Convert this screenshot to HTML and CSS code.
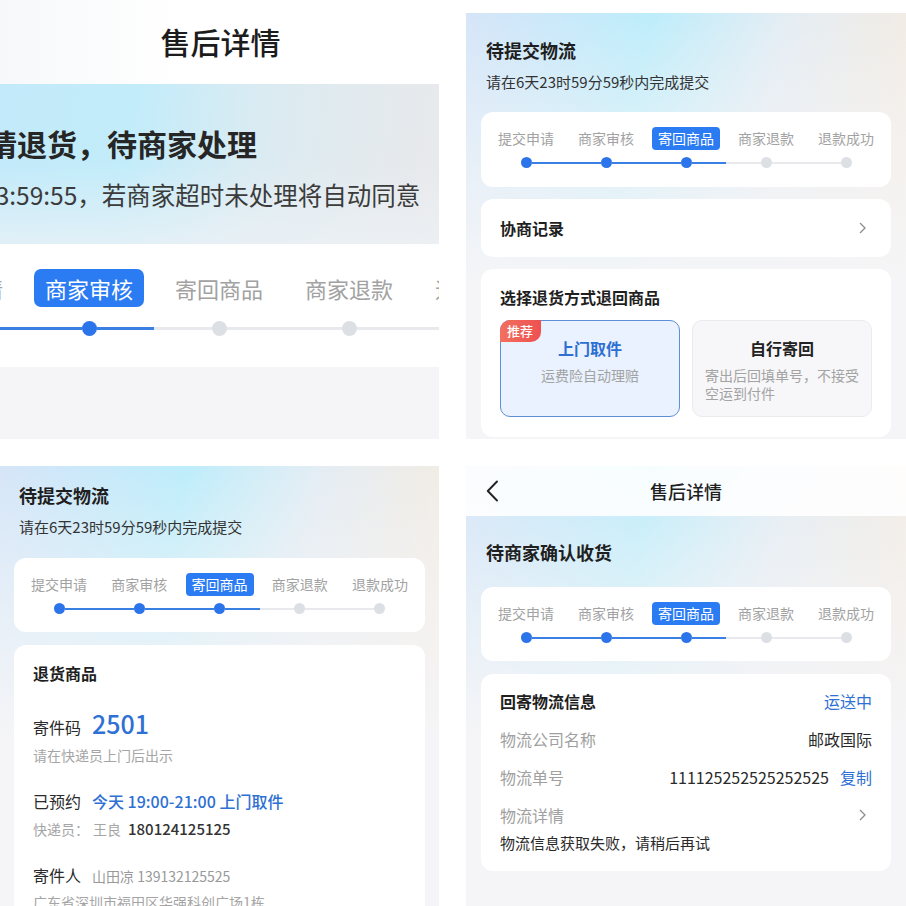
FILE: index.html
```html
<!DOCTYPE html>
<html lang="zh-CN">
<head>
    <meta charset="UTF-8">
    <meta name="viewport" content="width=device-width, initial-scale=1.0">
    <title>售后详情</title>
    <link rel="stylesheet" href="styles.css">
</head>
<body>
<div class="board">

    <!-- 1: zoomed view of the top of the page -->
    <section class="shot">
        <header class="nav-big">售后详情</header>
        <div class="banner-big">
            <h1 class="banner-title">申请退货，待商家处理</h1>
            <p class="banner-sub">还剩6天23:59:55，若商家超时未处理将自动同意</p>
        </div>
        <div class="steps-big">
            <ol class="steps steps-lg">
                <li class="step done"><span class="step-name">提交申请</span><span class="step-track"><i></i></span></li>
                <li class="step current"><span class="step-name">商家审核</span><span class="step-track"><i></i></span></li>
                <li class="step"><span class="step-name">寄回商品</span><span class="step-track"><i></i></span></li>
                <li class="step"><span class="step-name">商家退款</span><span class="step-track"><i></i></span></li>
                <li class="step"><span class="step-name">退款成功</span><span class="step-track"><i></i></span></li>
            </ol>
        </div>
        <div class="fill"></div>
    </section>

    <!-- 2: choose return method -->
    <section class="shot app shot-low">
        <div class="status status-a">
            <h2 class="status-title">待提交物流</h2>
            <p class="status-sub">请在6天23时59分59秒内完成提交</p>
        </div>
        <div class="cards cards-a">
            <div class="card steps-card">
                <ol class="steps">
                    <li class="step done"><span class="step-name">提交申请</span><span class="step-track"><i></i></span></li>
                    <li class="step done"><span class="step-name">商家审核</span><span class="step-track"><i></i></span></li>
                    <li class="step current"><span class="step-name">寄回商品</span><span class="step-track"><i></i></span></li>
                    <li class="step"><span class="step-name">商家退款</span><span class="step-track"><i></i></span></li>
                    <li class="step"><span class="step-name">退款成功</span><span class="step-track"><i></i></span></li>
                </ol>
            </div>
            <div class="card link-card">
                <span class="card-title">协商记录</span>
                <svg class="chev" width="7" height="12" viewBox="0 0 7 12"><path d="M1 1l5 5-5 5" fill="none" stroke="#8c8c8c" stroke-width="1.3"/></svg>
            </div>
            <div class="card method-card">
                <div class="card-title method-title">选择退货方式退回商品</div>
                <div class="methods">
                    <div class="method picked">
                        <span class="badge">推荐</span>
                        <div class="method-name">上门取件</div>
                        <div class="method-desc center">运费险自动理赔</div>
                    </div>
                    <div class="method">
                        <div class="method-name">自行寄回</div>
                        <div class="method-desc">寄出后回填单号，不接受空运到付件</div>
                    </div>
                </div>
            </div>
        </div>
    </section>

    <!-- 3: pickup booked -->
    <section class="shot app">
        <div class="status status-b">
            <h2 class="status-title">待提交物流</h2>
            <p class="status-sub">请在6天23时59分59秒内完成提交</p>
        </div>
        <div class="cards cards-b">
            <div class="card steps-card">
                <ol class="steps">
                    <li class="step done"><span class="step-name">提交申请</span><span class="step-track"><i></i></span></li>
                    <li class="step done"><span class="step-name">商家审核</span><span class="step-track"><i></i></span></li>
                    <li class="step current"><span class="step-name">寄回商品</span><span class="step-track"><i></i></span></li>
                    <li class="step"><span class="step-name">商家退款</span><span class="step-track"><i></i></span></li>
                    <li class="step"><span class="step-name">退款成功</span><span class="step-track"><i></i></span></li>
                </ol>
            </div>
            <div class="card goods-card">
                <div class="card-title">退货商品</div>
                <div class="kv kv-code"><span class="kv-label">寄件码</span><span class="code">2501</span></div>
                <div class="hint">请在快递员上门后出示</div>
                <div class="kv kv-gap"><span class="kv-label">已预约</span><span class="kv-blue">今天 19:00-21:00 上门取件</span></div>
                <div class="hint hint-gap">快递员：<span class="courier">王良</span><span class="phone">180124125125</span></div>
                <div class="kv kv-gap"><span class="kv-label">寄件人</span><span class="kv-gray">山田凉 139132125525</span></div>
                <div class="hint hint-addr">广东省深圳市福田区华强科创广场1栋</div>
            </div>
        </div>
    </section>

    <!-- 4: waiting for merchant to receive -->
    <section class="shot app">
        <header class="nav">
            <svg class="back" width="12" height="22" viewBox="0 0 12 22"><path d="M11 1.5L1.8 11 11 20.5" fill="none" stroke="#222" stroke-width="1.9" stroke-linecap="round" stroke-linejoin="round"/></svg>
            <span class="nav-title">售后详情</span>
            <span></span>
        </header>
        <div class="status status-c">
            <h2 class="status-title">待商家确认收货</h2>
        </div>
        <div class="cards cards-c">
            <div class="card steps-card">
                <ol class="steps">
                    <li class="step done"><span class="step-name">提交申请</span><span class="step-track"><i></i></span></li>
                    <li class="step done"><span class="step-name">商家审核</span><span class="step-track"><i></i></span></li>
                    <li class="step current"><span class="step-name">寄回商品</span><span class="step-track"><i></i></span></li>
                    <li class="step"><span class="step-name">商家退款</span><span class="step-track"><i></i></span></li>
                    <li class="step"><span class="step-name">退款成功</span><span class="step-track"><i></i></span></li>
                </ol>
            </div>
            <div class="card info-card">
                <div class="info-row"><span class="card-title">回寄物流信息</span><span class="link">运送中</span></div>
                <div class="info-row"><span class="muted">物流公司名称</span><span class="value">邮政国际</span></div>
                <div class="info-row"><span class="muted">物流单号</span><span class="value">111125252525252525<span class="link copy">复制</span></span></div>
                <div class="info-row"><span class="muted">物流详情</span><svg class="chev" width="7" height="12" viewBox="0 0 7 12"><path d="M1 1l5 5-5 5" fill="none" stroke="#8c8c8c" stroke-width="1.3"/></svg></div>
                <p class="info-note">物流信息获取失败，请稍后再试</p>
            </div>
        </div>
    </section>

</div>
</body>
</html>
```

FILE: styles.css
```css
body {
    margin: 0;
    background: #fff;
    font-family: "Noto Sans CJK SC", "Noto Sans", sans-serif;
    color: #333;
}

.board {
    display: grid;
    grid-template-columns: 439px 440px;
    grid-template-rows: 439px 440px;
    gap: 27px;
    width: 906px;
    height: 906px;
    overflow: hidden;
}

.shot {
    display: flex;
    flex-direction: column;
    overflow: hidden;
    white-space: nowrap;
}
.shot-low {
    margin-top: 13px;
}

/* panel 1 */
.nav-big {
    height: 84px;
    flex: none;
    display: flex;
    align-items: center;
    justify-content: center;
    padding: 0 0 3px 2px;
    box-sizing: border-box;
    font-size: 30px;
    font-weight: 500;
    color: #1c1c1c;
    background: linear-gradient(90deg, #f6f8fa, #fff 40%, #fff);
}
.banner-big {
    height: 160px;
    flex: none;
    box-sizing: border-box;
    padding-top: 39px;
    background:
        linear-gradient(180deg, rgba(238, 242, 246, 0) 50%, rgba(238, 242, 246, 0.7) 100%),
        linear-gradient(98deg, #c2eafa 0%, #c3ecfa 30%, #dbebf2 58%, #e9e9eb 100%);
}
.banner-title {
    margin: 0 0 0 -43px;
    font-size: 30px;
    line-height: 40px;
    font-weight: 700;
    color: #262626;
}
.banner-sub {
    margin: 15px 0 0 -105px;
    font-size: 24.5px;
    line-height: 34px;
    color: #3b3b3b;
}
.steps-big {
    height: 123px;
    flex: none;
    box-sizing: border-box;
    padding-top: 25px;
    background: #fff;
}
.fill {
    flex: 1;
    background: #f5f5f7;
}

/* step bar */
.steps {
    display: flex;
    list-style: none;
    margin: 0;
    padding: 0;
}
.step {
    flex: 1;
    display: flex;
    flex-direction: column;
    align-items: center;
}
.step-name {
    font-size: 14px;
    line-height: 23px;
    padding: 0 6px;
    border-radius: 4px;
    color: #a2a2a2;
}
.step.current .step-name {
    background: #2b7bf3;
    color: #fff;
}
.step-track {
    align-self: stretch;
    display: flex;
    align-items: center;
    height: 11px;
    margin-top: 7px;
}
.step-track::before,
.step-track::after {
    content: "";
    flex: 1;
    height: 2px;
    background: #e7e9ed;
}
.step-track i {
    width: 11px;
    height: 11px;
    border-radius: 50%;
    background: #dcdfe4;
}
.step.done .step-track::before,
.step.done .step-track::after,
.step.current .step-track::before,
.step.current .step-track::after {
    background: #3a7fe4;
}
.step.done .step-track i,
.step.current .step-track i {
    background: #2b74ea;
}
.step:first-child .step-track::before,
.step:last-child .step-track::after {
    visibility: hidden;
}

.steps-lg {
    margin-left: -106px;
}
.steps-lg .step {
    flex: none;
    width: 130px;
}
.steps-lg .step-name {
    font-size: 22px;
    line-height: 38px;
    padding: 0 11px;
    border-radius: 7px;
}
.steps-lg .step-track {
    height: 15px;
    margin-top: 14px;
}
.steps-lg .step-track i {
    width: 15px;
    height: 15px;
}
.steps-lg .step-track::before,
.steps-lg .step-track::after {
    height: 2.5px;
}

/* app panels */
.app {
    background:
        linear-gradient(180deg, rgba(245, 245, 247, 0) 0, rgba(245, 245, 247, 0.55) 130px, #f5f5f7 270px),
        linear-gradient(100deg, #d6e5f8 0%, #bdedfb 36%, #e4edf4 62%, #f9ebdc 100%);
    background-color: #f5f5f7;
}

.status-title {
    margin: 0;
    font-size: 18px;
    line-height: 26px;
    font-weight: 700;
    color: #1f1f1f;
}
.status-sub {
    margin: 8px 0 0;
    font-size: 15px;
    line-height: 22px;
    color: #333;
}
.status-a {
    padding: 24px 20px 0;
}
.status-b {
    padding: 16px 19px 0;
}
.status-c {
    padding: 23px 20px 0;
}

.cards {
    display: flex;
    flex-direction: column;
    flex: 1;
}
.cards-a {
    padding: 19px 15px 0;
    gap: 12px;
}
.cards-b {
    padding: 20px 14px 0;
    gap: 13px;
}
.cards-c {
    padding: 22px 15px 0;
    gap: 13px;
}

.card {
    background: #fff;
    border-radius: 12px;
    flex: none;
}
.card-title {
    font-size: 16px;
    line-height: 24px;
    font-weight: 600;
    color: #1f1f1f;
}

.steps-card {
    height: 75px;
    box-sizing: border-box;
    padding: 15px 5px 0;
}
.cards-b .steps-card,
.cards-c .steps-card {
    height: 74px;
}

.link-card {
    height: 58px;
    display: flex;
    align-items: center;
    justify-content: space-between;
    padding: 0 25px 0 19px;
}

.method-card {
    padding: 17px 19px 20px;
}
.method-title {
    line-height: 22px;
}
.methods {
    display: flex;
    gap: 12px;
    margin-top: 12px;
}
.method {
    position: relative;
    flex: 1;
    height: 97px;
    box-sizing: border-box;
    padding: 16px 12px 0;
    border: 1px solid #ebebee;
    border-radius: 10px;
    background: #f7f7f9;
}
.method.picked {
    border: 1.5px solid #5d8fd4;
    background: #e9f2fe;
}
.badge {
    position: absolute;
    top: -1.5px;
    left: -1.5px;
    width: 41px;
    height: 22px;
    font-size: 13px;
    line-height: 22px;
    text-align: center;
    color: #fff;
    font-weight: 500;
    border-radius: 10px 0 10px 0;
    background: linear-gradient(90deg, #f2705f, #ee5151);
}
.method-name {
    font-size: 16px;
    line-height: 22px;
    font-weight: 600;
    text-align: center;
    color: #222;
}
.picked .method-name {
    color: #2e6fd2;
}
.method-desc {
    margin-top: 7px;
    font-size: 14px;
    line-height: 18px;
    color: #a3a3a3;
    white-space: normal;
}
.method-desc.center {
    text-align: center;
}

/* panel 3 goods */
.goods-card {
    flex: 1;
    padding: 16px 19px 0;
    border-radius: 12px 12px 0 0;
}
.kv {
    display: flex;
    align-items: baseline;
    gap: 11px;
    line-height: 24px;
}
.kv-code {
    margin-top: 21px;
    line-height: 34px;
}
.kv-gap {
    margin-top: 24px;
}
.kv-label {
    font-size: 16px;
    color: #2a2a2a;
}
.code {
    font-size: 25px;
    font-weight: 500;
    color: #2e70d3;
}
.kv-blue {
    font-size: 16px;
    font-weight: 500;
    color: #2e70d3;
}
.kv-gray {
    font-size: 14px;
    color: #999;
}
.hint {
    margin-top: 1px;
    font-size: 14px;
    line-height: 20px;
    color: #a5a5a5;
}
.hint-gap {
    margin-top: 6px;
}
.hint-addr {
    margin-top: 4px;
}
.courier {
    margin: 0 7px 0 4px;
}
.phone {
    font-size: 15px;
    font-weight: 500;
    color: #333;
}

/* panel 4 */
.nav {
    height: 50px;
    flex: none;
    display: grid;
    grid-template-columns: 1fr auto 1fr;
    align-items: center;
    padding: 0 20px;
    background: rgba(255, 255, 255, 0.88);
}
.nav-title {
    font-size: 18px;
    font-weight: 500;
    color: #1f1f1f;
}
.info-card {
    padding: 8px 19px 17px;
}
.info-row {
    height: 38px;
    display: flex;
    align-items: center;
    justify-content: space-between;
}
.info-row .chev {
    margin-right: 6px;
}
.muted {
    font-size: 16px;
    color: #a0a0a0;
}
.value {
    font-size: 16px;
    color: #2a2a2a;
}
.link {
    font-size: 16px;
    color: #2e70d3;
}
.copy {
    margin-left: 11px;
}
.info-note {
    margin: -2px 0 0;
    font-size: 15px;
    line-height: 22px;
    color: #2a2a2a;
}
```
